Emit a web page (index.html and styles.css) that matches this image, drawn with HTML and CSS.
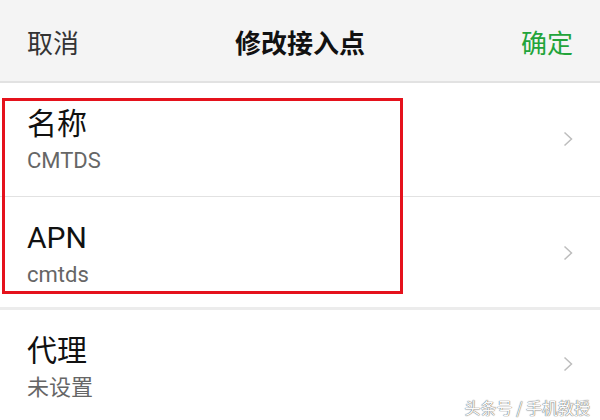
FILE: index.html
```html
<!DOCTYPE html>
<html lang="zh-CN">
<head>
<meta charset="utf-8">
<title>修改接入点</title>
<link rel="stylesheet" href="styles.css">
</head>
<body>
<div class="screen">
  <header class="topbar">
    <span class="cancel">取消</span>
    <span class="title">修改接入点</span>
    <span class="confirm">确定</span>
  </header>

  <section class="group">
    <div class="row row-first">
      <div class="text">
        <div class="label">名称</div>
        <div class="value">CMTDS</div>
      </div>
      <svg class="chev" viewBox="0 0 10 16" width="10" height="16"><polyline points="1.5,1.5 8.5,8 1.5,14.5" fill="none" stroke="#bdbdbd" stroke-width="1.5"/></svg>
    </div>
    <div class="row row-second">
      <div class="text">
        <div class="label">APN</div>
        <div class="value">cmtds</div>
      </div>
      <svg class="chev" viewBox="0 0 10 16" width="10" height="16"><polyline points="1.5,1.5 8.5,8 1.5,14.5" fill="none" stroke="#bdbdbd" stroke-width="1.5"/></svg>
    </div>
  </section>

  <section class="group group-next">
    <div class="row row-third">
      <div class="text">
        <div class="label">代理</div>
        <div class="value">未设置</div>
      </div>
      <svg class="chev" viewBox="0 0 10 16" width="10" height="16"><polyline points="1.5,1.5 8.5,8 1.5,14.5" fill="none" stroke="#bdbdbd" stroke-width="1.5"/></svg>
    </div>
  </section>

  <div class="highlight"></div>
  <div class="watermark">头条号 / 手机教授</div>
</div>
</body>
</html>
```

FILE: styles.css
```css
* { box-sizing: border-box; }

html, body {
  margin: 0;
  padding: 0;
  background: #ffffff;
}

body {
  font-family: Roboto, "Noto Sans CJK SC", "Noto Sans", sans-serif;
  color: #111;
}

.screen {
  position: relative;
  width: 600px;
  height: 420px;
  overflow: hidden;
  background: #fff;
}

.topbar {
  height: 83px;
  background: #f4f4f4;
  border-bottom: 2px solid #e2e2e2;
  display: grid;
  grid-template-columns: 1fr auto 1fr;
  align-items: center;
  padding: 2px 27px 0 27px;
  font-family: "Noto Sans CJK SC", sans-serif;
  font-size: 26px;
  line-height: 34px;
}

.cancel {
  color: #333;
  justify-self: start;
}

.title {
  color: #111;
  font-weight: 700;
  justify-self: center;
}

.confirm {
  color: #22a43a;
  justify-self: end;
}

.group-next {
  border-top: 3px solid #ececec;
}

.row {
  display: flex;
  justify-content: space-between;
  align-items: flex-start;
  padding: 23px 27px 0 27px;
}

.row-first {
  height: 114px;
  border-bottom: 1px solid #e2e2e2;
}

.row-second {
  height: 110px;
}

.row-third {
  height: 120px;
  padding-top: 23px;
}

.label {
  font-size: 30px;
  line-height: 36px;
  color: #111;
}

.value {
  font-size: 22px;
  line-height: 38px;
  color: #666;
}

.chev {
  margin-top: 25px;
  display: block;
}

.row-third .chev {
  margin-top: 23px;
}

.highlight {
  position: absolute;
  left: 2px;
  top: 98px;
  width: 401px;
  height: 196px;
  border: 3px solid #e5121c;
}

.watermark {
  position: absolute;
  right: 10px;
  bottom: 3px;
  font-family: "Noto Sans CJK SC", sans-serif;
  font-size: 16px;
  line-height: 20px;
  color: #fbfbfb;
  text-shadow: 0 0 1px #555, 0 0 1px #777;
}
```
